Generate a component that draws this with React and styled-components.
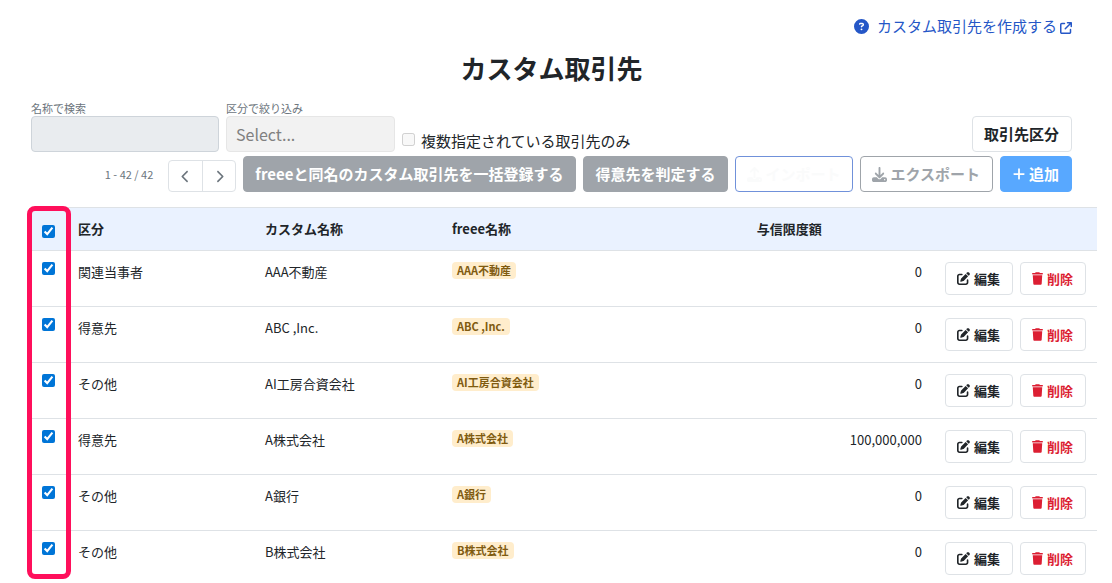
import React, { useState } from 'react';
import styled, { createGlobalStyle, css } from 'styled-components';
import {
  FaArrowUpRightFromSquare,
  FaChevronLeft,
  FaChevronRight,
  FaCircleQuestion,
  FaDownload,
  FaPenToSquare,
  FaPlus,
  FaTrash,
  FaUpload,
} from 'react-icons/fa6';

const GlobalStyle = createGlobalStyle`
  * {
    box-sizing: border-box;
  }

  body {
    margin: 0;
    background: #fff;
    color: #212529;
    font-family: 'Noto Sans CJK JP', 'Noto Sans', sans-serif;
    font-size: 13px;
    line-height: 20px;
  }

  button,
  input,
  select {
    font-family: inherit;
    margin: 0;
  }
`;

const Page = styled.main`
  height: 100vh;
  overflow: hidden;
  padding: 15px 15px 0 31px;
`;

const HelpRow = styled.div`
  display: flex;
  justify-content: flex-end;
  padding-right: 25px;
`;

const HelpLink = styled.a`
  display: flex;
  align-items: center;
  color: #2557c7;
  font-size: 15px;
  line-height: 22px;
  text-decoration: none;

  .help-icon {
    margin-right: 8px;
  }

  .external-icon {
    margin: 3px 0 0 3px;
  }
`;

const Title = styled.h1`
  margin: 12px 25px 13px 0;
  font-size: 26px;
  font-weight: 700;
  line-height: 38px;
  text-align: center;
`;

const FilterRow = styled.div`
  display: flex;
  align-items: flex-end;
  padding-right: 25px;
`;

const Field = styled.div`
  display: flex;
  flex-direction: column;
  width: ${({ $width }) => $width};
  margin-right: 7px;

  label {
    color: #6c757d;
    font-size: 11px;
    line-height: 16px;
  }
`;

const control = css`
  width: 100%;
  height: 36px;
  border-radius: 4px;
  font-size: 16px;
`;

const SearchInput = styled.input`
  ${control}
  padding: 0 10px;
  border: 1px solid #ced4da;
  background: #e9ecef;
`;

const CategorySelect = styled.select`
  ${control}
  padding: 0 9px;
  border: 1px solid #e6e6e6;
  background: #f2f2f2;
  color: #808080;
  opacity: 1;
  appearance: none;
`;

const MultiCheck = styled.label`
  display: flex;
  align-items: center;
  font-size: 15px;
  line-height: 22px;

  input {
    width: 13px;
    height: 13px;
    margin: 0 6px 3px 0;
  }
`;

const Button = styled.button`
  display: flex;
  align-items: center;
  justify-content: center;
  gap: 3px;
  height: 36px;
  padding: 0 12px 0 11px;
  border: 1px solid ${({ $border }) => $border};
  border-radius: 4px;
  background: ${({ $bg }) => $bg || '#fff'};
  color: ${({ $color }) => $color};
  font-size: 15px;
  font-weight: 700;
  line-height: 22px;
  white-space: nowrap;

  &:disabled {
    opacity: 0.65;
  }
`;

const CategoryButton = styled(Button)`
  margin-left: auto;
`;

const ActionRow = styled.div`
  display: flex;
  align-items: center;
  justify-content: flex-end;
  gap: 7px;
  margin: 4px 25px 15px 0;
`;

const PageCount = styled.span`
  margin-right: 8px;
  color: #6c757d;
  font-size: 11px;
  line-height: 16px;
`;

const Pager = styled.div`
  display: flex;
  height: 32px;
  margin-top: 4px;
  border: 1px solid #dee2e6;
  border-radius: 4px;

  button {
    display: flex;
    align-items: center;
    justify-content: center;
    width: 33px;
    padding: 0;
    border: 0;
    background: none;
    color: #6c757d;
  }

  button + button {
    border-left: 1px solid #dee2e6;
  }
`;

const TableWrap = styled.div`
  position: relative;
`;

const Table = styled.table`
  width: 100%;
  border-collapse: separate;
  border-spacing: 0;
  table-layout: fixed;
`;

const Th = styled.th`
  width: ${({ $width }) => $width};
  height: 44px;
  padding: 0 8px;
  border-top: 1px solid #dee2e6;
  border-bottom: 1px solid #dee2e6;
  background: #eaf2ff;
  font-weight: 700;
  text-align: left;
`;

const Td = styled.td`
  padding: 11px 8px;
  border-bottom: 1px solid #dee2e6;
  text-align: ${({ $align }) => $align || 'left'};
  vertical-align: top;
`;

const RowCheck = styled.input`
  display: block;
  width: 13px;
  height: 13px;
  margin: ${({ $head }) => ($head ? '5px' : '0')} 0 0 3px;
  accent-color: #0075d7;
`;

const Badge = styled.span`
  display: block;
  width: fit-content;
  padding: 0 5px;
  border-radius: 4px;
  background: #ffedcc;
  color: #805b10;
  font-size: 11px;
  font-weight: 700;
  line-height: 17px;
`;

const RowActions = styled.div`
  display: flex;
  gap: 7px;
  margin: 0 3px 0 7px;
`;

const RowButton = styled(Button)`
  gap: 4px;
  height: 33px;
  font-size: 13px;
  line-height: 20px;
`;

const TrashIcon = styled(FaTrash)`
  width: 11px;
  height: 13px;
`;

// Outline around the checkbox column, drawn over the table
const ColumnMarker = styled.div`
  position: absolute;
  top: -1px;
  left: -4px;
  width: 44px;
  height: 373px;
  border: 5px solid #ff0f5b;
  border-radius: 8px;
  pointer-events: none;
`;

const partners = [
  { id: 1, category: '関連当事者', name: 'AAA不動産', limit: '0' },
  { id: 2, category: '得意先', name: 'ABC ,Inc.', limit: '0' },
  { id: 3, category: 'その他', name: 'AI工房合資会社', limit: '0' },
  { id: 4, category: '得意先', name: 'A株式会社', limit: '100,000,000' },
  { id: 5, category: 'その他', name: 'A銀行', limit: '0' },
  { id: 6, category: 'その他', name: 'B株式会社', limit: '0' },
];

const App = () => {
  const [selected, setSelected] = useState(partners.map(({ id }) => id));
  const allSelected = selected.length === partners.length;

  const toggleAll = () => setSelected(allSelected ? [] : partners.map(({ id }) => id));

  const toggle = (id) => {
    setSelected(selected.includes(id) ? selected.filter((item) => item !== id) : [...selected, id]);
  };

  return (
    <Page>
      <GlobalStyle />
      <HelpRow>
        <HelpLink href="#help">
          <FaCircleQuestion className="help-icon" size={15} />
          カスタム取引先を作成する
          <FaArrowUpRightFromSquare className="external-icon" size={12} />
        </HelpLink>
      </HelpRow>
      <Title>カスタム取引先</Title>

      <FilterRow>
        <Field $width="188px">
          <label htmlFor="name">名称で検索</label>
          <SearchInput id="name" type="text" disabled />
        </Field>
        <Field $width="169px">
          <label htmlFor="category">区分で絞り込み</label>
          <CategorySelect id="category" disabled>
            <option>Select...</option>
          </CategorySelect>
        </Field>
        <MultiCheck>
          <input type="checkbox" disabled />
          複数指定されている取引先のみ
        </MultiCheck>
        <CategoryButton type="button" $border="#dee2e6" $color="#212529">
          取引先区分
        </CategoryButton>
      </FilterRow>

      <ActionRow>
        <PageCount>1 - 42 / 42</PageCount>
        <Pager>
          <button type="button" aria-label="前へ">
            <FaChevronLeft size={13} />
          </button>
          <button type="button" aria-label="次へ">
            <FaChevronRight size={13} />
          </button>
        </Pager>
        <Button type="button" disabled $border="#6c757d" $bg="#6c757d" $color="#fff">
          freeeと同名のカスタム取引先を一括登録する
        </Button>
        <Button type="button" disabled $border="#6c757d" $bg="#6c757d" $color="#fff">
          得意先を判定する
        </Button>
        <Button type="button" disabled $border="#2557c7" $color="#f8f9fa">
          <FaUpload size={15} />
          インポート
        </Button>
        <Button type="button" disabled $border="#6c757d" $color="#6c757d">
          <FaDownload size={15} />
          エクスポート
        </Button>
        <Button type="button" disabled $border="#007bff" $bg="#007bff" $color="#fff">
          <FaPlus size={14} />
          追加
        </Button>
      </ActionRow>

      <TableWrap>
        <Table>
          <thead>
            <tr>
              <Th $width="39px">
                <RowCheck type="checkbox" aria-label="すべて選択" $head checked={allSelected} onChange={toggleAll} />
              </Th>
              <Th $width="187px">区分</Th>
              <Th $width="187px">カスタム名称</Th>
              <Th>freee名称</Th>
              <Th $width="17%">与信限度額</Th>
              <Th $width="167px" aria-label="操作" />
            </tr>
          </thead>
          <tbody>
            {partners.map(({ id, category, name, limit }) => (
              <tr key={id}>
                <Td>
                  <RowCheck
                    type="checkbox"
                    aria-label={name}
                    checked={selected.includes(id)}
                    onChange={() => toggle(id)}
                  />
                </Td>
                <Td>{category}</Td>
                <Td>{name}</Td>
                <Td>
                  <Badge>{name}</Badge>
                </Td>
                <Td $align="right">{limit}</Td>
                <Td>
                  <RowActions>
                    <RowButton type="button" $border="#dee2e6" $color="#212529">
                      <FaPenToSquare size={13} />
                      編集
                    </RowButton>
                    <RowButton type="button" $border="#dee2e6" $color="#dc1e32">
                      <TrashIcon />
                      削除
                    </RowButton>
                  </RowActions>
                </Td>
              </tr>
            ))}
          </tbody>
        </Table>
        <ColumnMarker />
      </TableWrap>
    </Page>
  );
};

export default App;
